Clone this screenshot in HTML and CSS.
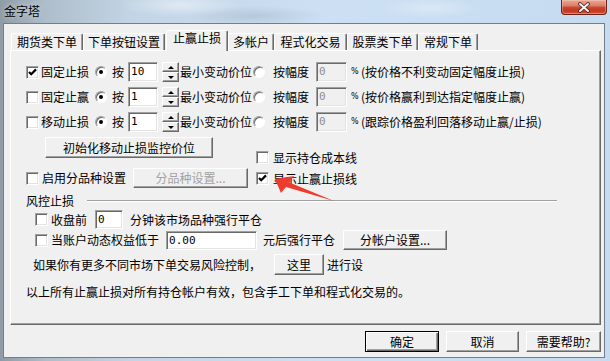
FILE: index.html
```html
<!DOCTYPE html>
<html lang="zh-CN">
<head>
<meta charset="utf-8">
<title>金字塔</title>
<link rel="stylesheet" href="styles.css">
</head>
<body>
<div class="window">
  <div class="titlebar">
    <div class="title">金字塔</div>
    <div class="close">
      <svg width="14" height="11" viewBox="0 0 14 11">
        <path d="M3 2 L11 9 M11 2 L3 9" stroke="#4a2520" stroke-width="3.6" stroke-linecap="round"/>
        <path d="M3 2 L11 9 M11 2 L3 9" stroke="#f4f4f4" stroke-width="2" stroke-linecap="round"/>
      </svg>
    </div>
  </div>

  <div class="client">
    <div class="tabs">
      <div class="tab t1">期货类下单</div>
      <div class="tab t2">下单按钮设置</div>
      <div class="tab t3 active">止赢止损</div>
      <div class="tab t4">多帐户</div>
      <div class="tab t5">程式化交易</div>
      <div class="tab t6">股票类下单</div>
      <div class="tab t7">常规下单</div>
    </div>

    <div class="panel">
      <div class="stop-rows">
        <div class="row">
          <span class="cb checked"><svg width="11" height="11" viewBox="0 0 11 11"><path d="M2 5 L4.2 7.2 L9 2.4" fill="none" stroke="#000" stroke-width="2.2"/></svg></span>
          <span class="lbl l-main">固定止损</span>
          <span class="rb checked r1"></span>
          <span class="lbl l-an">按</span>
          <span class="edit e-tick">10</span>
          <span class="spin"><span class="up"></span><span class="dn"></span></span>
          <span class="lbl l-tick">最小变动价位</span>
          <span class="rb r2"></span>
          <span class="lbl l-pct">按幅度</span>
          <span class="edit disabled e-pct">0</span>
          <span class="pct">%</span>
          <span class="lbl l-note">(按价格不利变动固定幅度止损)</span>
        </div>
        <div class="row">
          <span class="cb"></span>
          <span class="lbl l-main">固定止赢</span>
          <span class="rb checked r1"></span>
          <span class="lbl l-an">按</span>
          <span class="edit e-tick">1</span>
          <span class="spin"><span class="up"></span><span class="dn"></span></span>
          <span class="lbl l-tick">最小变动价位</span>
          <span class="rb r2"></span>
          <span class="lbl l-pct">按幅度</span>
          <span class="edit disabled e-pct">0</span>
          <span class="pct">%</span>
          <span class="lbl l-note">(按价格赢利到达指定幅度止赢)</span>
        </div>
        <div class="row">
          <span class="cb"></span>
          <span class="lbl l-main">移动止损</span>
          <span class="rb checked r1"></span>
          <span class="lbl l-an">按</span>
          <span class="edit e-tick">1</span>
          <span class="spin"><span class="up"></span><span class="dn"></span></span>
          <span class="lbl l-tick">最小变动价位</span>
          <span class="rb r2"></span>
          <span class="lbl l-pct">按幅度</span>
          <span class="edit disabled e-pct">0</span>
          <span class="pct">%</span>
          <span class="lbl l-note">(跟踪价格盈利回落移动止赢/止损)</span>
        </div>
      </div>

      <div class="mid">
        <div class="mid-left">
          <div class="btn b-init">初始化移动止损监控价位</div>
          <div class="mid-row">
            <span class="cb"></span>
            <span class="lbl l-variety">启用分品种设置</span>
            <div class="btn disabled b-variety">分品种设置...</div>
          </div>
        </div>
        <div class="mid-right">
          <div class="opt-row">
            <span class="cb"></span>
            <span class="lbl l-opt">显示持仓成本线</span>
          </div>
          <div class="opt-row">
            <span class="cb checked"><svg width="11" height="11" viewBox="0 0 11 11"><path d="M2 5 L4.2 7.2 L9 2.4" fill="none" stroke="#000" stroke-width="2.2"/></svg></span>
            <span class="lbl l-opt">显示止赢止损线</span>
          </div>
        </div>
      </div>

      <div class="group-head">
        <span class="lbl">风控止损</span>
        <span class="group-line"></span>
      </div>

      <div class="risk-row r-close">
        <span class="cb ind"></span>
        <span class="lbl l-risk">收盘前</span>
        <span class="edit e-min">0</span>
        <span class="lbl l-after">分钟该市场品种强行平仓</span>
      </div>
      <div class="risk-row r-equity">
        <span class="cb ind"></span>
        <span class="lbl l-risk">当账户动态权益低于</span>
        <span class="edit e-equity">0.00</span>
        <span class="lbl l-yuan">元后强行平仓</span>
        <div class="btn b-account">分帐户设置...</div>
      </div>
      <div class="risk-row r-more">
        <span class="lbl l-more">如果你有更多不同市场下单交易风险控制，</span>
        <div class="btn b-here">这里</div>
        <span class="lbl l-set">进行设</span>
      </div>
      <div class="note-row">以上所有止赢止损对所有持仓帐户有效，包含手工下单和程式化交易的。</div>
    </div>

    <div class="footer">
      <div class="btn default b-ok">确定</div>
      <div class="btn b-cancel">取消</div>
      <div class="btn b-help">需要帮助?</div>
    </div>
  </div>

  <svg class="arrow" width="610" height="361" viewBox="0 0 610 361">
    <polygon points="275,179 294,176 289.5,182.5 334,201 286,187 281,193" fill="#ee3b2f"/>
  </svg>
</div>
</body>
</html>
```

FILE: styles.css
```css
* { box-sizing: border-box; }

html, body {
  margin: 0;
  padding: 0;
}

body {
  width: 610px;
  height: 361px;
  overflow: hidden;
  font-family: "Noto Sans CJK SC", "Noto Sans", sans-serif;
  font-size: 12px;
  line-height: 14px;
  color: #000;
  background: #c9dcf0;
}

.window {
  position: relative;
  width: 610px;
  height: 361px;
  background:
    radial-gradient(ellipse 60px 12px at 180px 5px, rgba(255,255,255,.45), rgba(255,255,255,0)),
    radial-gradient(ellipse 70px 10px at 255px 16px, rgba(95,115,135,.18), rgba(95,115,135,0)),
    radial-gradient(ellipse 50px 10px at 430px 8px, rgba(255,255,255,.3), rgba(255,255,255,0)),
    linear-gradient(90deg, #8f9ca6 0, #aebdca 45px, #c2d4e5 130px, #cde0f3 320px, #c6dbf0 610px);
}

/* title bar */
.titlebar {
  height: 23px;
  display: flex;
  justify-content: space-between;
  align-items: flex-start;
}

.title {
  padding: 4px 0 0 4px;
  font-size: 12px;
  line-height: 14px;
  color: #000;
  text-shadow: 0 0 5px rgba(255,255,255,.7);
}

.close {
  width: 46px;
  height: 15px;
  margin-right: 3px;
  border: 1px solid #6a2219;
  border-top: none;
  border-radius: 0 0 4px 4px;
  background: linear-gradient(180deg, #e9a796 0%, #dc8067 40%, #c7432a 55%, #c23a22 80%, #d9573c 100%);
  box-shadow: inset 0 0 0 1px rgba(255,220,210,.35);
  display: flex;
  align-items: center;
  justify-content: center;
}

/* client area */
.client {
  margin-left: 3px;
  width: 602px;
  height: 335px;
  border: 1px solid #6f7f8e;
  background: #f0f0f0;
}

/* tabs */
.tabs {
  display: flex;
  align-items: flex-end;
  height: 19px;
  margin: 7px 0 0 7px;
}

.tab {
  height: 17px;
  padding-top: 1px;
  text-align: center;
  white-space: nowrap;
  line-height: 14px;
  background: #f0f0f0;
  border-top: 1px solid #fff;
  border-left: 1px solid #fff;
  border-right: 1px solid #696969;
  box-shadow: inset -1px 0 0 #a0a0a0;
  border-radius: 2px 2px 0 0;
}

.t1 { width: 72px; }
.t2 { width: 82px; }
.t3 { width: 62px; margin-left: 1px; }
.t4 { width: 46px; }
.t5 { width: 73px; }
.t6 { width: 71px; }
.t7 { width: 60px; }

.tab.active {
  position: relative;
  z-index: 1;
  height: 21px;
  padding-top: 0;
  margin-bottom: -1px;
}

/* panel */
.panel {
  margin-left: 6px;
  width: 591px;
  height: 275px;
  border: 1px solid;
  border-color: #fff #696969 #696969 #fff;
  box-shadow: inset -1px -1px 0 #a0a0a0;
  padding: 11px 0 0 15px;
}

.lbl {
  white-space: nowrap;
  flex: none;
}

/* checkbox */
.cb {
  flex: none;
  width: 13px;
  height: 13px;
  background: #fff;
  border: 1px solid;
  border-color: #a0a0a0 #fff #fff #a0a0a0;
  box-shadow: inset 1px 1px 0 #696969, inset -1px -1px 0 #e3e3e3;
  display: flex;
  align-items: center;
  justify-content: center;
}

.cb svg { display: block; }

/* radio */
.rb {
  flex: none;
  width: 12px;
  height: 12px;
  border-radius: 50%;
  background: #fff;
  border: 1px solid;
  border-color: #a0a0a0 #fff #fff #a0a0a0;
  box-shadow: inset 1px 1px 0 #696969;
  display: flex;
  align-items: center;
  justify-content: center;
}

.rb.checked::after {
  content: "";
  width: 4px;
  height: 4px;
  border-radius: 50%;
  background: #000;
}

/* edit boxes */
.edit {
  flex: none;
  height: 20px;
  background: #fff;
  border: 1px solid;
  border-color: #a0a0a0 #fff #fff #a0a0a0;
  box-shadow: inset 1px 1px 0 #696969, inset -1px -1px 0 #e3e3e3;
  font-family: "DejaVu Sans Mono", "Liberation Mono", monospace;
  font-size: 11px;
  line-height: 13px;
  padding: 2px 0 0 2px;
  display: flex;
  align-items: flex-start;
}

.edit.disabled {
  background: #f0f0f0;
  color: #8d8d8d;
}

/* spinner */
.spin {
  flex: none;
  display: flex;
  flex-direction: column;
  width: 17px;
  height: 20px;
  margin-left: 4px;
}

.spin span {
  flex: 1;
  background: #f0f0f0;
  border: 1px solid;
  border-color: #fff #696969 #696969 #fff;
  box-shadow: inset -1px -1px 0 #a0a0a0;
  display: flex;
  align-items: center;
  justify-content: center;
}

.spin span::after {
  content: "";
  width: 0;
  height: 0;
  border-left: 3px solid transparent;
  border-right: 3px solid transparent;
}

.spin .up::after { border-bottom: 3px solid #000; }
.spin .dn::after { border-top: 3px solid #000; }

/* stop rows */
.row {
  display: flex;
  align-items: center;
  height: 20px;
}

.row + .row { margin-top: 5px; }

.l-main { margin-left: 2px; }
.r1 { margin-left: 6px; }
.l-an { margin-left: 5px; }
.e-tick { margin-left: 4px; width: 30px; }
.l-tick { margin-left: 1px; }
.r2 { margin-left: 1px; }
.l-pct { margin-left: 8px; }
.e-pct { margin-left: 7px; width: 31px; }

.pct {
  flex: none;
  width: 7px;
  margin-left: 4px;
  font-family: "DejaVu Sans", sans-serif;
  font-size: 8px;
}

.l-note { margin-left: 3px; }

/* buttons */
.btn {
  flex: none;
  height: 21px;
  background: #f0f0f0;
  border: 1px solid;
  border-color: #fff #696969 #696969 #fff;
  box-shadow: inset -1px -1px 0 #a0a0a0;
  display: flex;
  align-items: center;
  justify-content: center;
  white-space: nowrap;
}

.btn.disabled { color: #a3a3a3; }

.btn.default {
  border-color: #000;
  box-shadow: inset 1px 1px 0 #fff, inset -1px -1px 0 #696969, inset -2px -2px 0 #a0a0a0;
}

/* middle block */
.mid {
  display: flex;
  margin-top: 5px;
}

.mid-left {
  width: 230px;
  flex: none;
}

.b-init {
  margin-left: 19px;
  width: 168px;
}

.mid-row {
  display: flex;
  align-items: center;
  height: 20px;
  margin-top: 10px;
}

.l-variety { margin-left: 3px; }

.b-variety {
  margin-left: 7px;
  width: 115px;
  height: 20px;
}

.mid-right {
  padding-top: 10px;
}

.opt-row {
  display: flex;
  align-items: center;
  height: 21px;
}

.l-opt { margin-left: 4px; }

/* group */
.group-head {
  display: flex;
  align-items: center;
  height: 14px;
  margin-top: 5px;
}

.group-line {
  margin-left: 13px;
  width: 470px;
  height: 2px;
  border-top: 1px solid #a0a0a0;
  border-bottom: 1px solid #fff;
}

.risk-row {
  display: flex;
  align-items: center;
}

.r-close { height: 19px; margin-top: 2px; }
.r-equity { height: 22px; }
.r-more { height: 21px; margin-top: 3px; }

.cb.ind { margin-left: 9px; }
.l-risk { margin-left: 3px; }

.e-min {
  margin-left: 8px;
  width: 28px;
  height: 19px;
}

.l-after { margin-left: 7px; }

.e-equity {
  margin-left: 7px;
  width: 91px;
  height: 19px;
}

.l-yuan { margin-left: 6px; }

.b-account {
  margin-left: 8px;
  width: 104px;
  height: 20px;
}

.l-more { margin-left: 7px; }

.b-here {
  margin-left: 13px;
  width: 50px;
}

.l-set { margin-left: 3px; }

.note-row {
  margin-top: 10px;
  height: 14px;
  white-space: nowrap;
}

/* footer */
.footer {
  display: flex;
  justify-content: flex-end;
  gap: 7px;
  margin: 6px 0 0 6px;
  width: 591px;
}

.b-ok { width: 74px; }
.b-cancel { width: 73px; }
.b-help { width: 75px; }

/* annotation arrow overlay */
.arrow {
  position: absolute;
  left: 0;
  top: 0;
  pointer-events: none;
}
```
